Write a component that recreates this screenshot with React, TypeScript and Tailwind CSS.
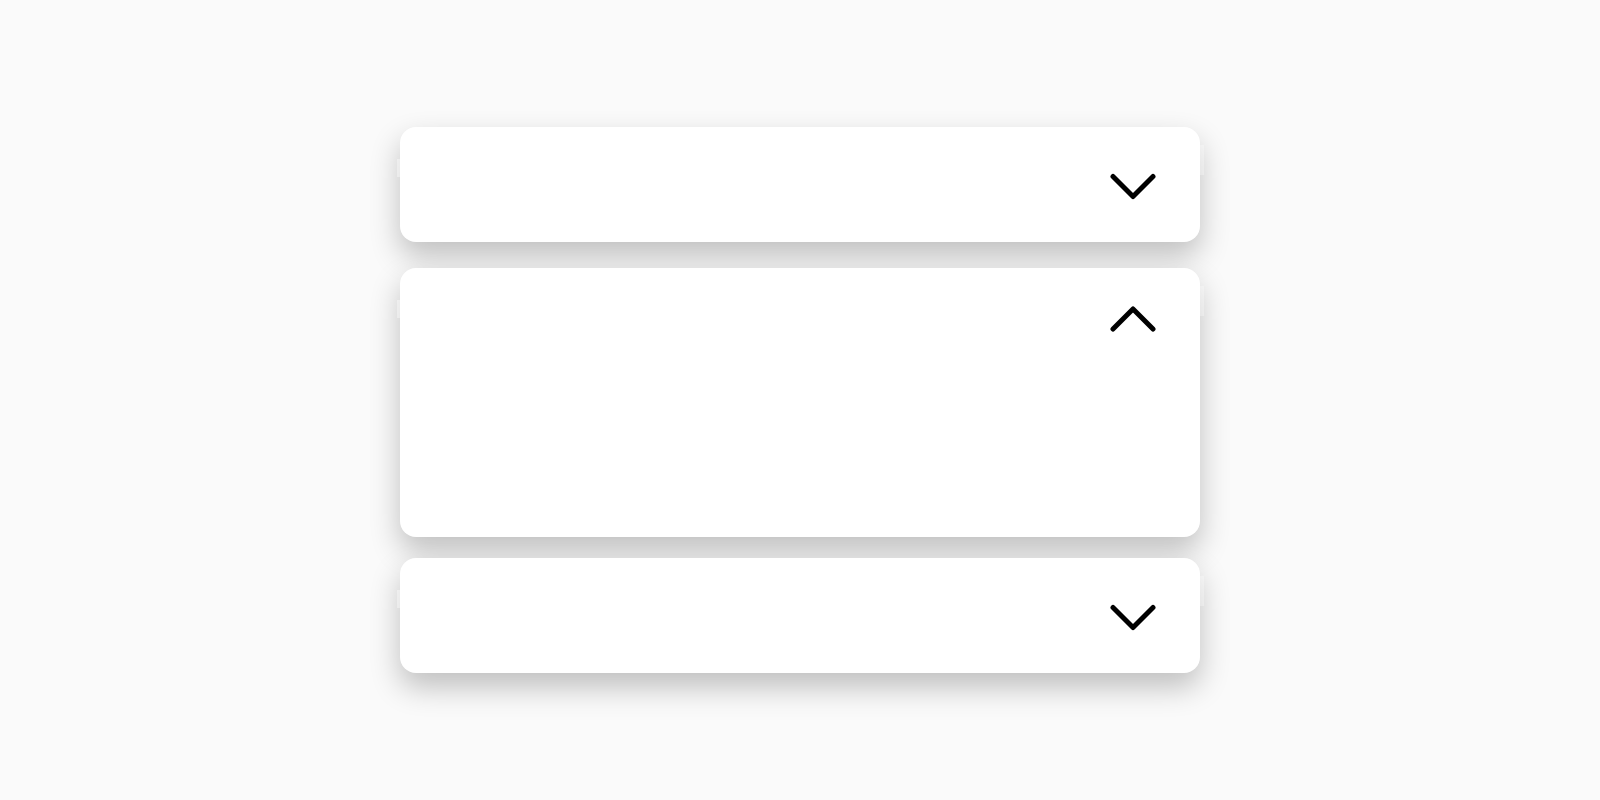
import { useState } from 'react';

const items = [
  { id: 1, gap: 'mt-0' },
  { id: 2, gap: 'mt-[26px]' },
  { id: 3, gap: 'mt-[21px]' },
];

const Chevron = ({ up }: { up: boolean }) => (
  <svg width="48" height="32" viewBox="0 0 48 32" fill="none" className="block">
    <path
      d={up ? 'M5 26 L25 6 L45 26' : 'M5 7.5 L25 27.5 L45 7.5'}
      stroke="#000"
      strokeWidth="5"
      strokeLinecap="round"
      strokeLinejoin="round"
    />
  </svg>
);

export default function App() {
  const [open, setOpen] = useState<number | null>(2);

  return (
    <div className="min-h-screen w-full bg-[#fafafa] flex flex-col items-center justify-center font-['Liberation_Sans',sans-serif]">
      {items.map((item) => {
        const isOpen = open === item.id;
        return (
          <div
            key={item.id}
            className={`relative w-[800px] bg-white rounded-2xl shadow-[0_14px_30px_rgba(0,0,0,0.24)] ${item.gap}`}
          >
            {/* faint edge highlights */}
            <div className="absolute -left-[3px] top-[32px] w-[3px] h-[18px] bg-white/40" />
            <div className="absolute -right-[4px] top-[18px] w-[4px] h-[30px] bg-white/30" />
            <button
              onClick={() => setOpen(isOpen ? null : item.id)}
              className={`w-full flex items-center justify-end pr-[44px] ${isOpen ? 'h-[102px]' : 'h-[115px]'}`}
            >
              <Chevron up={isOpen} />
            </button>
            {isOpen && <div className="h-[167px]" />}
          </div>
        );
      })}
    </div>
  );
}
